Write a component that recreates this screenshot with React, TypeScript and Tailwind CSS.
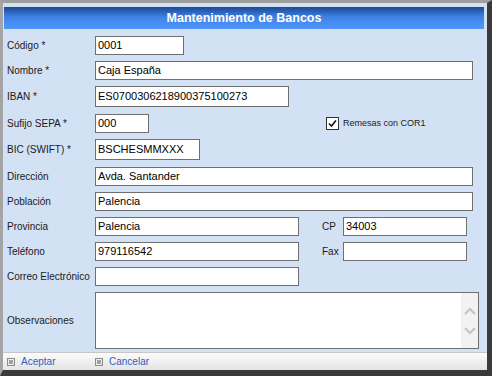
const font = "font-['Liberation_Sans',Arial,sans-serif]";

function Field({ value = "", className = "" }: { value?: string; className?: string }) {
  return (
    <div
      className={`h-full bg-white border border-[#6f6f6f] pl-[2px] flex items-center text-[11px] text-black whitespace-nowrap overflow-hidden ${className}`}
    >
      {value}
    </div>
  );
}

function Label({ text, className = "w-[88px]" }: { text: string; className?: string }) {
  return <span className={`text-[10px] text-[#1a1a1a] shrink-0 ${className}`}>{text}</span>;
}

function FooterButton({ label }: { label: string }) {
  return (
    <div className="flex items-center gap-[6px] w-[88px]">
      <div className="w-[8px] h-[8px] border border-[#8d8d8d] bg-[#ececec] flex items-center justify-center">
        <div className="w-[4px] h-[4px] bg-[#a2a2a2]" />
      </div>
      <span className="text-[10px] text-[#2a62c4]">{label}</span>
    </div>
  );
}

export default function App() {
  return (
    <div
      className={`w-[492px] h-[376px] flex flex-col bg-[#d3e1f5] border-t-[3px] border-l-[3px] border-r-[5px] border-b-[6px] border-t-[#9d9d9d] border-l-[#a4a4a4] border-r-[#3a3a3a] border-b-[#3a3a3a] ${font}`}
    >
      <div className="mt-[4px] ml-[1px] mr-[3px] h-[22px] shrink-0 flex items-center justify-center bg-gradient-to-b from-[#1c4893] via-[#3f82e6] via-45% to-[#4f97fb]">
        <span className="text-white font-bold text-[12.5px] leading-none">Mantenimiento de Bancos</span>
      </div>

      <div className="flex-1 flex flex-col pt-[7px] pl-[4px]">
        <div className="flex items-center h-[19px] mb-[6px]">
          <Label text="Código *" />
          <Field value="0001" className="w-[89px]" />
        </div>
        <div className="flex items-center h-[19px] mb-[6px]">
          <Label text="Nombre *" />
          <Field value="Caja España" className="w-[378px]" />
        </div>
        <div className="flex items-center h-[21px] mb-[7px]">
          <Label text="IBAN *" />
          <Field value="ES0700306218900375100273" className="w-[194px]" />
        </div>
        <div className="flex items-center h-[19px] mb-[6px]">
          <Label text="Sufijo SEPA *" />
          <Field value="000" className="w-[54px]" />
          <div className="ml-[177px] flex items-center gap-[4px]">
            <div className="w-[13px] h-[13px] bg-white border border-[#333] flex items-center justify-center">
              <svg width="9" height="9" viewBox="0 0 9 9">
                <polyline points="1,4.5 3.5,7 8,1.5" fill="none" stroke="#111" strokeWidth="1.6" />
              </svg>
            </div>
            <span className="text-[9px] text-[#1a1a1a]">Remesas con COR1</span>
          </div>
        </div>
        <div className="flex items-center h-[21px] mb-[7px]">
          <Label text="BIC (SWIFT) *" />
          <Field value="BSCHESMMXXX" className="w-[105px]" />
        </div>
        <div className="flex items-center h-[19px] mb-[6px]">
          <Label text="Dirección" />
          <Field value="Avda. Santander" className="w-[378px]" />
        </div>
        <div className="flex items-center h-[19px] mb-[6px]">
          <Label text="Población" />
          <Field value="Palencia" className="w-[378px]" />
        </div>
        <div className="flex items-center h-[19px] mb-[6px]">
          <Label text="Provincia" />
          <Field value="Palencia" className="w-[204px]" />
          <Label text="CP" className="ml-[23px] w-[21px]" />
          <Field value="34003" className="w-[124px]" />
        </div>
        <div className="flex items-center h-[19px] mb-[6px]">
          <Label text="Teléfono" />
          <Field value="979116542" className="w-[204px]" />
          <Label text="Fax" className="ml-[23px] w-[21px]" />
          <Field className="w-[124px]" />
        </div>
        <div className="flex items-center h-[19px] mb-[6px]">
          <Label text="Correo Electrónico" />
          <Field className="w-[204px]" />
        </div>
        <div className="flex items-center h-[57px]">
          <Label text="Observaciones" />
          <div className="w-[384px] h-full bg-white border border-[#6f6f6f] flex justify-end">
            <div className="w-[17px] h-full bg-[#f2f2f2] flex flex-col items-center justify-center gap-[12px]">
              <svg width="12" height="8" viewBox="0 0 12 8">
                <polyline points="1,7 6,2 11,7" fill="none" stroke="#c2c2c2" strokeWidth="2" />
              </svg>
              <svg width="12" height="8" viewBox="0 0 12 8">
                <polyline points="1,1 6,6 11,1" fill="none" stroke="#c2c2c2" strokeWidth="2" />
              </svg>
            </div>
          </div>
        </div>
      </div>

      <div className="h-[18px] shrink-0 flex items-center pl-[4px] border-t border-[#c6c6c6] bg-gradient-to-b from-[#fbfbfb] to-[#e4e4e4]">
        <FooterButton label="Aceptar" />
        <FooterButton label="Cancelar" />
      </div>
    </div>
  );
}
